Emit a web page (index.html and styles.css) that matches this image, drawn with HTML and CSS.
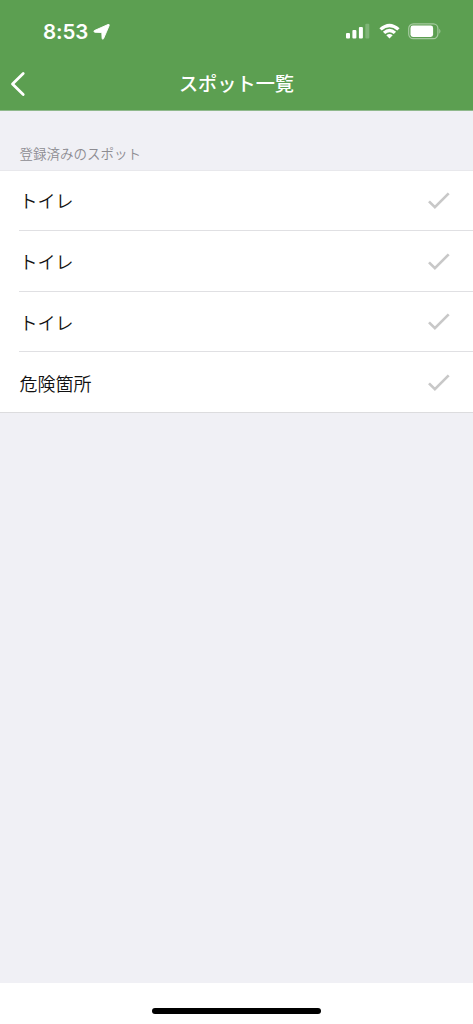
FILE: index.html
```html
<!DOCTYPE html>
<html lang="ja">
<head>
<meta charset="utf-8">
<title>スポット一覧</title>
<link rel="stylesheet" href="styles.css">
</head>
<body>
<div class="screen">
  <header class="header">
    <div class="status">
      <div class="clock"><span class="time">8:53</span>
        <svg class="location" width="18" height="18" viewBox="0 0 18 18"><path d="M1.3 7.6 15 1.5q1.6-.5 1.2 1L10.6 15.6q-1 1.5-1.5-.3L8.8 9.5 2 9.3q-1.9-.5-.7-1.7Z"/></svg>
      </div>
      <div class="indicators">
        <svg width="24" height="16" viewBox="0 0 24 16"><rect x="0" y="10" width="4" height="5.6" rx="1"/><rect x="6.4" y="7" width="4" height="8.6" rx="1"/><rect x="12.9" y="4" width="4" height="11.6" rx="1"/><rect x="19.3" y=".7" width="4" height="14.9" rx="1" opacity=".22"/></svg>
        <svg class="wifi" width="21" height="16" viewBox="0 0 21 16"><path d="M.4 5.2Q10.5-3.8 20.6 5.2L18.3 7.6Q10.5.7 2.7 7.6ZM3.9 8.8Q10.5 2.9 17.1 8.8L14.8 11.1Q10.5 7.5 6.2 11.1ZM7.3 12.3Q10.5 9.5 13.7 12.3L10.5 15.6Z"/></svg>
        <svg class="battery" width="34" height="17" viewBox="0 0 34 17"><rect class="shell" x=".7" y=".9" width="29.2" height="14.8" rx="4.6"/><rect x="2.5" y="2.6" width="22.6" height="11.3" rx="2.4"/><path opacity=".5" d="M31.4 5.8q2 2.5 0 5Z"/></svg>
      </div>
    </div>
    <div class="nav">
      <svg class="back" width="16" height="26" viewBox="0 0 16 26"><path d="M13.2 2.6 2.5 13.1 13.2 23.6"/></svg>
      <h1 class="title">スポット一覧</h1>
    </div>
  </header>
  <main class="content">
    <h2 class="section-title">登録済みのスポット</h2>
    <ul class="list">
      <li class="row"><span>トイレ</span><svg class="check" width="24" height="20" viewBox="0 0 24 20"><path d="M2 10.4 7.9 16.2 21.7 2.4"/></svg></li>
      <li class="row"><span>トイレ</span><svg class="check" width="24" height="20" viewBox="0 0 24 20"><path d="M2 10.4 7.9 16.2 21.7 2.4"/></svg></li>
      <li class="row"><span>トイレ</span><svg class="check" width="24" height="20" viewBox="0 0 24 20"><path d="M2 10.4 7.9 16.2 21.7 2.4"/></svg></li>
      <li class="row"><span>危険箇所</span><svg class="check" width="24" height="20" viewBox="0 0 24 20"><path d="M2 10.4 7.9 16.2 21.7 2.4"/></svg></li>
    </ul>
  </main>
  <footer class="home"><div class="home-bar"></div></footer>
</div>
</body>
</html>
```
FILE: styles.css
```css
* { box-sizing: border-box; }
body { margin: 0; font-family: "Noto Sans CJK JP", sans-serif; }
.screen { display: flex; flex-direction: column; height: 1024px; background: #f0f0f5; overflow: hidden; }
.header { height: 111px; background: #5c9f51; color: #fff; border-bottom: 1px solid #90b98c; }
.status { display: flex; justify-content: space-between; height: 57px; padding: 21px 31px 0 43px; }
.clock { display: flex; height: 22px; align-items: center; gap: 5px; }
.time { font: 600 20.5px/22px Inter, sans-serif; width: 45px; white-space: nowrap; letter-spacing: -.1px; }
.status svg { fill: #fff; display: block; }
.status .location { stroke: #fff; stroke-width: .9; stroke-linejoin: round; }
.indicators { display: flex; align-items: flex-start; padding-top: 2px; }
.wifi { margin-left: 8.5px; }
.battery { margin-left: 8.5px; }
.battery .shell { fill: none; stroke: #fff; stroke-width: 1.2; opacity: .45; }
.nav { display: grid; grid-template-columns: 48px 1fr 48px; align-items: center; height: 53px; }
.back { margin-left: 10px; fill: none; stroke: #fff; stroke-width: 2.8; stroke-linecap: round; stroke-linejoin: round; }
.title { margin: 0; padding-bottom: 1px; text-align: center; font-size: 19.2px; line-height: 28px; font-weight: 500; white-space: nowrap; }
.content { flex: 1; }
.section-title { margin: 0; height: 59px; padding: 32px 0 0 19.5px; font-size: 13.5px; line-height: 20px; font-weight: 350; color: #8d8c92; }
.list { display: grid; grid-template-rows: 60px 61px 60px 60px; margin: 0; padding: 0 0 0 19px; list-style: none; background: #fff; border-top: 1px solid #e8e8ec; border-bottom: 1px solid #dcdcde; height: 243px; }
.row { display: flex; align-items: center; justify-content: space-between; padding: 0 22px 0 .5px; font-size: 18px; line-height: 26px; font-weight: 350; color: #111; border-bottom: 1px solid #e0e0e3; }
.row:nth-child(n+2) { padding-top: 1px; }
.row:last-child { border-bottom: 0; padding-top: 2px; }
.row span { padding-bottom: 1px; }
.check { fill: none; stroke: #c8c8c8; stroke-width: 2.7; }
.home { display: flex; justify-content: center; height: 41px; padding-top: 25px; background: #fff; }
.home-bar { width: 169px; height: 6px; border-radius: 3px; background: #000; }
```
